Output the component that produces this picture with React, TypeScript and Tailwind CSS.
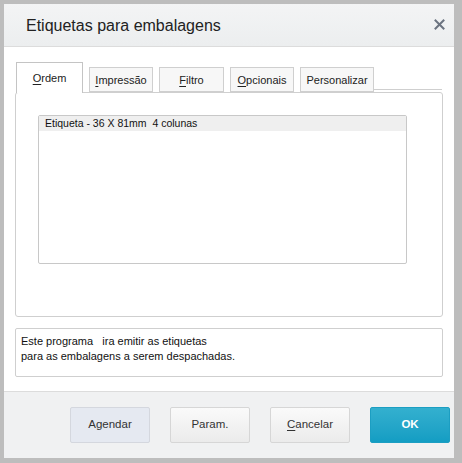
const tabs = [
  { key: 'ordem', first: 'O', rest: 'rdem' },
  { key: 'impressao', first: 'I', rest: 'mpressão' },
  { key: 'filtro', first: 'F', rest: 'iltro' },
  { key: 'opcionais', first: 'O', rest: 'pcionais' },
  { key: 'personalizar', first: '', rest: 'Personalizar' },
];

const tabWidths: Record<string, string> = {
  ordem: 'w-[67px]',
  impressao: 'w-[64px]',
  filtro: 'w-[65px]',
  opcionais: 'w-[64px]',
  personalizar: 'w-[74px]',
};

export default function App() {
  return (
    <div
      className="w-[462px] h-[463px] bg-[#bdbdbd] pl-[4px] pt-[4px] pr-[8px] pb-[5px]"
      style={{ fontFamily: '"Liberation Sans", Arial, sans-serif' }}
    >
      <div className="w-full h-full bg-white flex flex-col">
        {/* header */}
        <div className="h-[43px] shrink-0 bg-gradient-to-b from-[#f3f4f5] to-[#eceeef] border-b border-[#dcdcdc] flex items-center justify-between pl-[22px] pr-[9px]">
          <span className="text-[16px] text-[#222] leading-none mt-[2px]">Etiquetas para embalagens</span>
          <svg width="11" height="11" viewBox="0 0 11 11" className="mb-[2px]">
            <path d="M1.5 1.5 L9.5 9.5 M9.5 1.5 L1.5 9.5" stroke="#6b7380" strokeWidth="2" strokeLinecap="square" />
          </svg>
        </div>

        {/* body */}
        <div className="flex-1 flex flex-col px-[11px]">
          <div className="mt-[15px] flex items-end pl-[1px] gap-[6px] relative">
            {tabs.map((t) => {
              const active = t.key === 'ordem';
              return (
                <div
                  key={t.key}
                  className={`${tabWidths[t.key]} ${
                    active
                      ? 'h-[31px] bg-white border border-b-0 border-[#c4c4c4] z-10 -mb-[1px] pt-[9px]'
                      : 'h-[25px] bg-[#f7f7f7] border border-[#cfcfcf] pt-[6px]'
                  } text-center text-[11px] leading-[13px] text-[#222]`}
                >
                  {t.first && <span className="underline underline-offset-[2px]">{t.first}</span>}
                  {t.rest}
                </div>
              );
            })}
            <div className="flex-1 -ml-[6px] border-b border-[#cfcfcf] mb-[2px] mr-[1px]" />
          </div>
          <div className="h-[225px] border border-[#cfcfcf] rounded-[3px] bg-white pt-[22px] pl-[22px]">
            <div className="w-[369px] h-[149px] border border-[#c8c8c8] rounded-[2px]">
              <div className="h-[15px] bg-[#efefef] text-[10.5px] leading-[15px] text-[#111] pl-[6px]">
                Etiqueta - 36 X 81mm&nbsp;&nbsp;4 colunas
              </div>
            </div>
          </div>

          <div className="mt-[11px] h-[49px] border border-[#cfcfcf] rounded-[2px] px-[5px] pt-[5px] text-[11px] leading-[15px] text-[#111]">
            <div className="whitespace-pre">Este programa   ira emitir as etiquetas</div>
            <div>para as embalagens a serem despachadas.</div>
          </div>
        </div>

        {/* footer */}
        <div className="h-[67px] shrink-0 bg-[#f0f1f2] border-t border-[#dcdcdc] flex items-start justify-end gap-[20px] pt-[15px] pr-[4px]">
          <button className="w-[80px] h-[36px] rounded-[2px] border border-[#d4d7de] bg-[#e5e9f1] text-[11.5px] text-[#333]">
            Agendar
          </button>
          <button className="w-[80px] h-[36px] rounded-[2px] border border-[#d6d6d6] bg-gradient-to-b from-[#fafafa] to-[#ebebeb] text-[11.5px] text-[#333]">
            Param.
          </button>
          <button className="w-[80px] h-[36px] rounded-[2px] border border-[#d6d6d6] bg-gradient-to-b from-[#fafafa] to-[#ebebeb] text-[11.5px] text-[#333]">
            <span className="underline underline-offset-[2px]">C</span>ancelar
          </button>
          <button className="w-[80px] h-[36px] rounded-[2px] border border-[#1c9ec2] bg-gradient-to-b from-[#33b0cf] to-[#139dc3] text-[11.5px] font-bold text-white">
            OK
          </button>
        </div>
      </div>
    </div>
  );
}
